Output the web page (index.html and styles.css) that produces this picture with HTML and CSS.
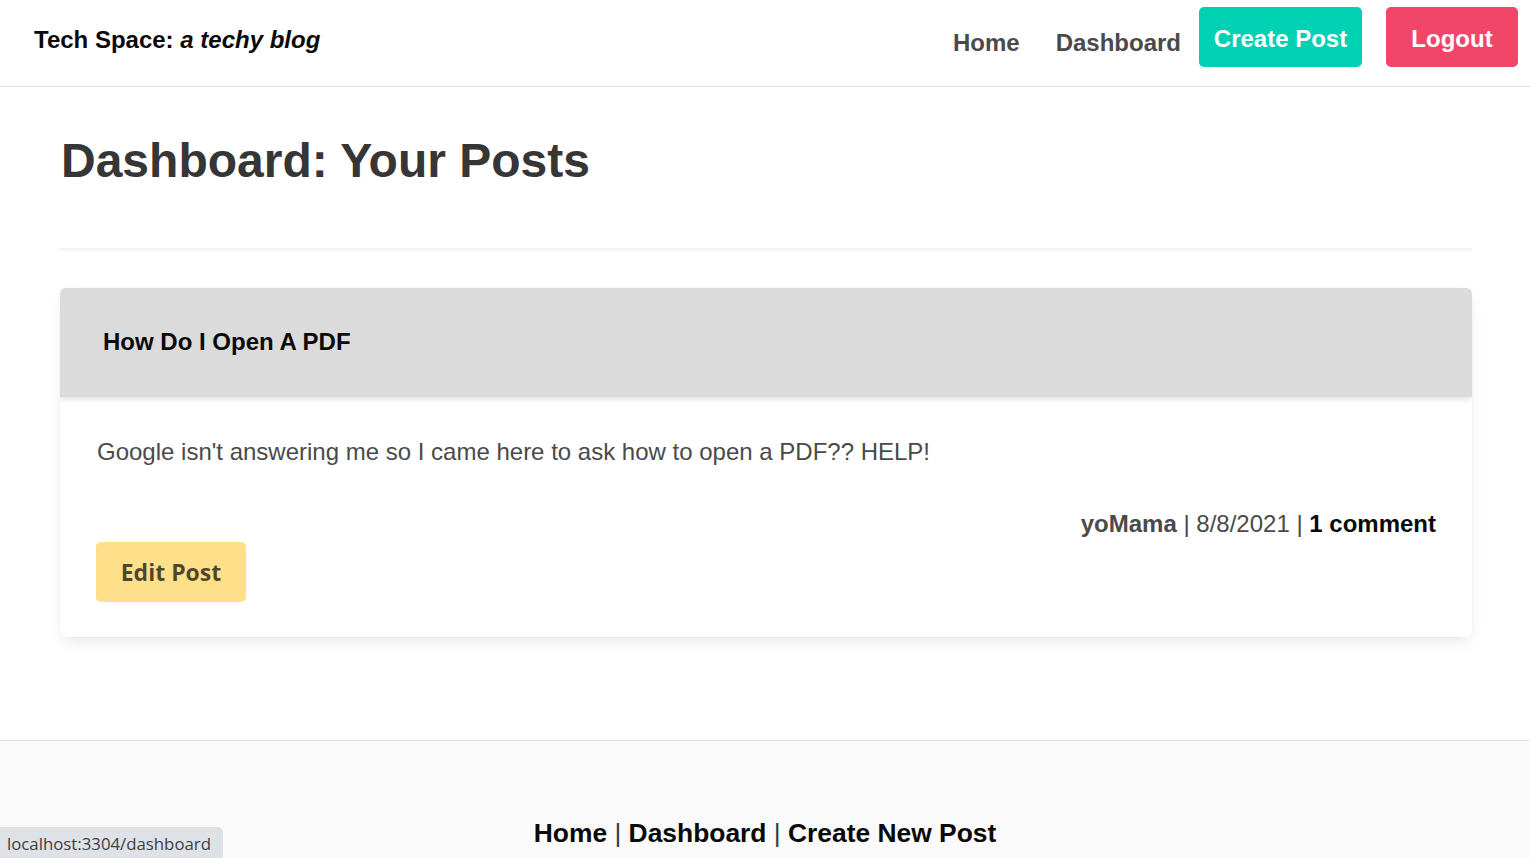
FILE: index.html
```html
<!DOCTYPE html>
<html lang="en">
<head>
<meta charset="utf-8">
<title>Tech Space</title>
<link rel="stylesheet" href="styles.css">
</head>
<body>
<nav class="navbar">
  <a class="brand" href="#">Tech Space: <em>a techy blog</em></a>
  <div class="nav-end">
    <a class="nav-link" href="#">Home</a>
    <a class="nav-link" href="#">Dashboard</a>
    <a class="btn btn-primary" href="#">Create Post</a>
    <a class="btn btn-danger" href="#">Logout</a>
  </div>
</nav>

<main class="container">
  <h1 class="page-title">Dashboard: Your Posts</h1>
  <hr class="divider">
  <article class="card">
    <header class="card-header">How Do I Open A PDF</header>
    <div class="card-body">
      <p class="post-text">Google isn't answering me so I came here to ask how to open a PDF?? HELP!</p>
      <p class="post-meta"><strong>yoMama</strong> | 8/8/2021 | <a href="#" class="comments">1 comment</a></p>
      <button class="btn-edit" type="button">Edit Post</button>
    </div>
  </article>
</main>

<footer class="footer">
  <p class="footer-links"><a href="#">Home</a> <span class="sep">|</span> <a href="#">Dashboard</a> <span class="sep">|</span> <a href="#">Create New Post</a></p>
</footer>

<div class="status-bubble">localhost:3304/dashboard</div>
</body>
</html>
```

FILE: styles.css
```css
* { box-sizing: border-box; }

html, body {
  margin: 0;
  padding: 0;
  background: #ffffff;
  font-family: "Liberation Sans", Arial, sans-serif;
  color: #4a4a4a;
}

a { text-decoration: none; }

.navbar {
  height: 87px;
  border-bottom: 1px solid #e3e3e3;
  display: flex;
  align-items: flex-start;
  justify-content: space-between;
  padding: 0 12px 0 34px;
}

.brand {
  margin-top: 25px;
  font-size: 24px;
  line-height: 29px;
  font-weight: bold;
  color: #0a0a0a;
}

.brand em { font-style: italic; }

.nav-end {
  display: flex;
  align-items: flex-start;
}

.nav-link {
  padding: 0 18px;
  margin-top: 28px;
  font-size: 24px;
  line-height: 29px;
  font-weight: bold;
  color: #4a4a4a;
}

.btn {
  margin-top: 7px;
  height: 60px;
  display: flex;
  align-items: center;
  justify-content: center;
  border-radius: 5px;
  font-size: 24px;
  font-weight: bold;
  color: #ffffff;
  padding-top: 4px;
}

.btn-primary {
  background: #00d1b2;
  width: 163px;
}

.btn-danger {
  background: #f14668;
  width: 132px;
  margin-left: 24px;
}

.container {
  padding: 0 58px 103px 60px;
}

.page-title {
  margin: 46px 0 0 1px;
  font-size: 48px;
  line-height: 56px;
  font-weight: bold;
  color: #363636;
}

.divider {
  margin: 59px 0 37px 0;
  border: none;
  height: 3px;
  background: #f5f5f5;
}

.card {
  background: #ffffff;
  border-radius: 6px;
  box-shadow: 0 8px 16px -4px rgba(10, 10, 10, 0.1), 0 0 0 1px rgba(10, 10, 10, 0.02);
  overflow: hidden;
}

.card-header {
  background: #dbdbdb;
  padding: 39px 43px 41px;
  font-size: 24px;
  line-height: 29px;
  font-weight: bold;
  color: #0a0a0a;
  box-shadow: 0 3px 5px rgba(10, 10, 10, 0.1);
  position: relative;
}

.card-body {
  padding: 37px 36px 35px 36px;
}

.post-text {
  margin: 0 0 36px 1px;
  font-size: 24px;
  line-height: 36px;
  color: #4a4a4a;
}

.post-meta {
  margin: 0;
  text-align: right;
  font-size: 24px;
  line-height: 36px;
  color: #4a4a4a;
}

.post-meta strong { font-weight: bold; }

.comments {
  font-weight: bold;
  color: #0a0a0a;
}

.btn-edit {
  display: block;
  width: 150px;
  height: 60px;
  border: none;
  border-radius: 5px;
  background: #ffe08a;
  color: rgba(0, 0, 0, 0.7);
  font-family: "Open Sans", "Noto Sans", sans-serif;
  font-size: 23px;
  font-weight: bold;
  padding: 0;
  cursor: pointer;
}

.footer {
  background: #fafafa;
  border-top: 1px solid #e3e3e3;
  padding: 74px 24px 48px;
}

.footer-links {
  margin: 0;
  text-align: center;
  font-size: 26.4px;
  line-height: 36px;
  font-weight: bold;
}

.footer-links a { color: #0a0a0a; }

.footer-links .sep {
  font-weight: normal;
  color: #363c4a;
}

.status-bubble {
  position: fixed;
  left: 0;
  bottom: 0;
  height: 31px;
  padding: 0 12px 0 7px;
  background: #dee1e6;
  border-top-right-radius: 5px;
  font-family: "Open Sans", "Noto Sans", sans-serif;
  font-size: 16.8px;
  line-height: 33px;
  color: #3c4043;
}
```
